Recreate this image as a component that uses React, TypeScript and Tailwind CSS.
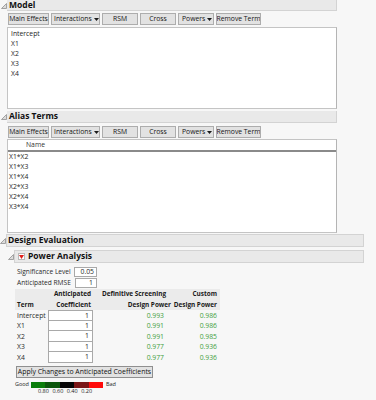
import React from "react";

function Disclosure() {
  return (
    <svg width="6" height="6" viewBox="0 0 6 6" className="block">
      <path d="M5.5 0.5 L5.5 5.5 L0.5 5.5 Z" fill="#dcdcdc" stroke="#8f8f8f" strokeWidth="0.8" />
    </svg>
  );
}

function Arrow() {
  return (
    <svg width="5" height="3" viewBox="0 0 5 3" className="block">
      <path d="M0 0 H5 L2.5 3 Z" fill="#1a1a1a" />
    </svg>
  );
}

function RedTri() {
  return (
    <div className="w-[7px] h-[7px] border border-[#b9b9b9] bg-white flex items-center justify-center">
      <svg width="5" height="4" viewBox="0 0 5 4" className="block">
        <path d="M0 0 H5 L2.5 4 Z" fill="#e0201c" />
      </svg>
    </div>
  );
}

function Btn({ className, children, arrow }: { className: string; children: React.ReactNode; arrow?: boolean }) {
  return (
    <div
      className={`h-[12px] bg-[#e2e2e2] border border-[#adadad] flex items-center text-[6.8px] leading-none text-[#141414] whitespace-nowrap overflow-hidden ${className}`}
    >
      {children}
      {arrow && (
        <span className="ml-auto pl-[2px]">
          <Arrow />
        </span>
      )}
    </div>
  );
}

function ButtonRow() {
  return (
    <div className="flex gap-[2px] pl-[8px]">
      <Btn className="w-[41px] justify-center">Main Effects</Btn>
      <Btn className="w-[49px] pl-[2px] pr-[3px]" arrow>
        Interactions
      </Btn>
      <Btn className="w-[36px] justify-center">RSM</Btn>
      <Btn className="w-[36px] justify-center">Cross</Btn>
      <Btn className="w-[36px] pl-[3px] pr-[3px]" arrow>
        Powers
      </Btn>
      <Btn className="w-[45px] justify-center border-[#8d8d8d]">Remove Term</Btn>
    </div>
  );
}

function TopHeader({ title, h }: { title: string; h: string }) {
  return (
    <div className={`flex ${h}`}>
      <div className="w-[7px] flex items-center justify-start pl-[1px]">
        <Disclosure />
      </div>
      <div className="w-[330px] h-full bg-[#e9e9e9] border-b border-r border-[#d3d3d3] flex items-center pl-[2px] font-bold text-[8.5px] leading-none text-[#111]">
        {title}
      </div>
    </div>
  );
}

const coefRows = [
  { term: "Intercept", dsd: "0.993", cus: "0.986", h: "h-[11px]" },
  { term: "X1", dsd: "0.991", cus: "0.986", h: "h-[10px]" },
  { term: "X2", dsd: "0.991", cus: "0.985", h: "h-[11px]" },
  { term: "X3", dsd: "0.977", cus: "0.936", h: "h-[10px]" },
  { term: "X4", dsd: "0.977", cus: "0.936", h: "h-[11px]" },
];

export default function App() {
  return (
    <div className="w-[376px] h-[400px] overflow-hidden bg-[#f7f7f7] text-[#1e1e1e] font-['Open_Sans',sans-serif] text-[6.8px] leading-[10px] whitespace-nowrap">
      <div className="flex flex-col">
        {/* Model */}
        <TopHeader title="Model" h="h-[11px]" />
        <div className="mt-[2px]">
          <ButtonRow />
        </div>
        <div className="mt-[2px] ml-[7px] w-[330px] h-[82px] bg-white border border-[#c4c4c4] border-r-[#b4b4b4] pt-[1px] pl-[3px]">
          {["Intercept", "X1", "X2", "X3", "X4"].map((t) => (
            <div key={t} className="h-[10px] leading-[10px]">
              {t}
            </div>
          ))}
        </div>

        {/* Alias Terms */}
        <div className="mt-[2px]">
          <TopHeader title="Alias Terms" h="h-[12px]" />
        </div>
        <div className="mt-[3px]">
          <ButtonRow />
        </div>
        <div className="mt-[1px] ml-[7px] w-[330px] h-[94px] bg-white border border-[#c4c4c4] border-r-[#b4b4b4]">
          <div className="h-[12px] border-b-2 border-[#8a8a8a] pl-[18px] leading-[10px] text-[#333]">Name</div>
          <div className="pl-[1px]">
            {["X1*X2", "X1*X3", "X1*X4", "X2*X3", "X2*X4", "X3*X4"].map((t) => (
              <div key={t} className="h-[10px] leading-[10px]">
                {t}
              </div>
            ))}
          </div>
        </div>

        {/* Design Evaluation */}
        <div className="mt-[1px] flex h-[13px]">
          <div className="w-[6px] flex items-center">
            <Disclosure />
          </div>
          <div className="w-[358px] h-full bg-[#e9e9e9] border border-[#d3d3d3] flex items-center pl-[1px] font-bold text-[8.5px] leading-none text-[#111]">
            Design Evaluation
          </div>
        </div>

        {/* Power Analysis */}
        <div className="mt-[3px] flex h-[13px] pl-[8px]">
          <div className="w-[6px] flex items-center">
            <Disclosure />
          </div>
          <div className="w-[350px] h-full bg-[#e9e9e9] border border-[#d3d3d3] flex items-center pl-[3px] gap-[3px] font-bold text-[8.5px] leading-none text-[#111]">
            <RedTri />
            Power Analysis
          </div>
        </div>

        {/* Parameters */}
        <div className="mt-[4px] flex flex-col gap-[1px] pl-[17px] text-[#2a2a2a]">
          <div className="flex h-[10px] items-center">
            <div className="w-[57px] text-[6.6px]">Significance Level</div>
            <div className="w-[23px] h-[10px] bg-white border border-[#a9a9a9] text-right pr-[2px] leading-[8px]">0.05</div>
          </div>
          <div className="flex h-[10px] items-center">
            <div className="w-[58px] text-[6.6px]">Anticipated RMSE</div>
            <div className="w-[22px] h-[10px] bg-white border border-[#a9a9a9] text-right pr-[3px] leading-[8px]">1</div>
          </div>
        </div>

        {/* Table */}
        <div className="mt-[1px] ml-[15px] w-[205px]">
          <div className="flex h-[21px] bg-[#ebebeb] font-bold text-[6.4px] text-[#1a1a1a] leading-[10.5px]">
            <div className="w-[33px] flex items-end pl-[2px]">Term</div>
            <div className="w-[47px] flex flex-col justify-end items-end pr-[4px]">
              <div>Anticipated</div>
              <div>Coefficient</div>
            </div>
            <div className="w-[76px] flex flex-col justify-end items-end">
              <div className="pr-[5px]">Definitive Screening</div>
              <div>Design Power</div>
            </div>
            <div className="w-[49px] flex flex-col justify-end items-end pr-[3px]">
              <div>Custom</div>
              <div>Design Power</div>
            </div>
          </div>
          {coefRows.map((r, i) => (
            <div key={r.term} className={`flex ${r.h} items-center`}>
              <div className="w-[33px] pl-[2px] text-[#2a2a2a]">{r.term}</div>
              <div className="w-[47px] h-full">
                <div
                  className={`w-[45px] h-full bg-white border-x border-b border-[#a9a9a9] ${i === 0 ? "border-t" : ""} flex items-center justify-end pr-[3px]`}
                >
                  1
                </div>
              </div>
              <div className="w-[76px] text-right pr-[7px] text-[#3f9f3f]">{r.dsd}</div>
              <div className="w-[49px] text-right pr-[3px] text-[#3f9f3f]">{r.cus}</div>
            </div>
          ))}
        </div>

        {/* Apply button */}
        <div className="mt-[3px] ml-[16px] w-[137px] h-[12px] bg-[#e2e2e2] border border-[#8f8f8f] flex items-center justify-center text-[6.9px] leading-none text-[#111] whitespace-nowrap">
          Apply Changes to Anticipated Coefficients
        </div>

        {/* Legend */}
        <div className="mt-[3px] ml-[15px] flex items-center h-[7px] text-[5.5px] leading-none text-[#222]">
          <div className="w-[16px]">Good</div>
          <div className="flex w-[72px] h-[6px]">
            <div className="flex-1 bg-[#0a7d0a]" />
            <div className="flex-1 bg-[#0b560b]" />
            <div className="flex-1 bg-[#050505]" />
            <div className="flex-1 bg-[#7a1616]" />
            <div className="flex-1 bg-[#ff0a0a]" />
          </div>
          <div className="ml-[3px]">Bad</div>
        </div>
        <div className="ml-[38px] flex text-[5.5px] leading-[6px] text-[#222]">
          <div className="w-[14.4px]">0.80</div>
          <div className="w-[14.4px]">0.60</div>
          <div className="w-[14.4px]">0.40</div>
          <div className="w-[14.4px]">0.20</div>
        </div>
      </div>
    </div>
  );
}
